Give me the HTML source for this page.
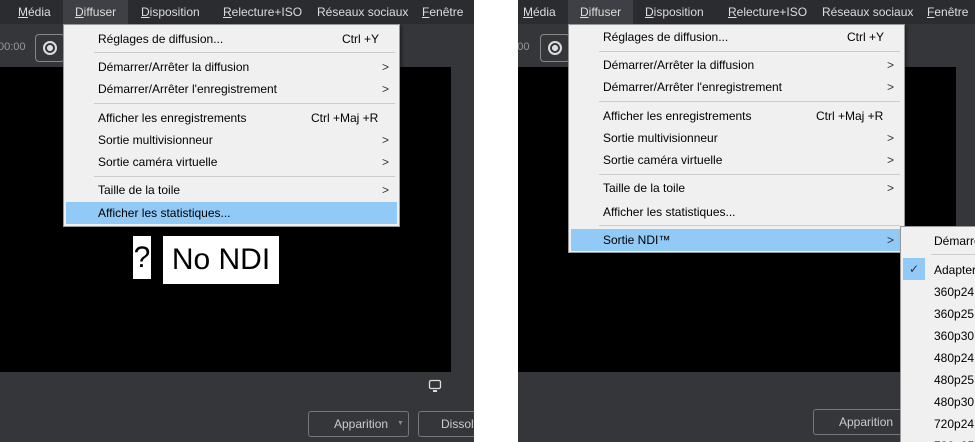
<!DOCTYPE html>
<html><head><meta charset="utf-8"><style>
*{margin:0;padding:0;box-sizing:border-box}
body{width:975px;height:442px;background:#fff;position:relative;overflow:hidden;font-family:"Liberation Sans",sans-serif;font-size:12px}
.p{position:absolute;top:0;height:442px;background:#35363a;overflow:hidden}
.bar{position:absolute;left:0;top:0;right:0;height:24px;background:#2b2c30}
.mi{position:absolute;top:5px;color:#ddd;font-size:12px}
.mi u{text-decoration:underline}
.hl{position:absolute;top:0;height:24px;background:#3f4045}
.blk{position:absolute;top:67px;height:305px;background:#000}
.menu{position:absolute;top:24px;width:337px;background:#f0f0f0;border:1px solid #999;box-shadow:2px 2px 3px rgba(0,0,0,.4)}
.it{position:absolute;left:34px;color:#000;white-space:nowrap}
.sc{position:absolute;color:#000}
.ar{position:absolute;left:318px;color:#333}
.sep{position:absolute;left:30px;right:4px;height:1px;background:#ccc}
.sel{position:absolute;left:2px;right:2px;height:22px;background:#91c9f7}
.btn{position:absolute;height:26px;border:1px solid #777;border-radius:3px;color:#ccc;font-size:12px;text-align:center;line-height:24px}
.rec{position:absolute;left:35px;top:34px;width:30px;height:28px;border:1px solid #888;border-radius:4px}
.rec:after{content:"";position:absolute;left:7px;top:6px;width:10px;height:10px;border:2px solid #ddd;border-radius:50%;background:radial-gradient(#ddd 40%,transparent 45%)}
</style></head><body>

<div class="p" style="left:0;width:474px">
 <div class="bar"></div>
 <div class="hl" style="left:63px;width:65px"></div>
 <div class="mi" style="left:18px"><u>M</u>édia</div>
 <div class="mi" style="left:75px"><u>D</u>iffuser</div>
 <div class="mi" style="left:141px"><u>D</u>isposition</div>
 <div class="mi" style="left:223px"><u>R</u>electure+ISO</div>
 <div class="mi" style="left:317px">Réseaux sociaux</div>
 <div class="mi" style="left:422px"><u>F</u>enêtre</div>
 <div style="position:absolute;left:-2px;top:41px;color:#999;font-size:11px">00:00</div>
 <div class="rec"></div>
 <div class="blk" style="left:0;width:451px"></div>
 <div style="position:absolute;left:133px;top:236px;width:18px;height:43px;background:#fff;font-size:30px;line-height:43px;text-align:center">?</div>
 <div style="position:absolute;left:163px;top:236px;width:116px;height:48px;background:#fff;font-size:30px;line-height:48px;text-align:center">No NDI</div>
 <svg style="position:absolute;left:428px;top:379px" width="14" height="14"><rect x="1.5" y="1.5" width="11" height="8" rx="1.5" fill="none" stroke="#ddd" stroke-width="1.3"/><rect x="5" y="11" width="4" height="2" fill="#ddd"/></svg>
 <div class="btn" style="left:308px;top:411px;width:101px;text-align:left;padding-left:25px">Apparition<span style="position:absolute;left:88px;top:0;font-size:7px;color:#888">▼</span></div>
 <div class="btn" style="left:418px;top:411px;width:70px;text-align:left;padding-left:22px">Dissolve</div>
 <div class="menu" style="left:63px;height:203px">
  <div class="it" style="top:7px">Réglages de diffusion...</div><div class="sc" style="left:278px;top:7px">Ctrl +Y</div>
  <div class="sep" style="top:27px"></div>
  <div class="it" style="top:35px">Démarrer/Arrêter la diffusion</div><div class="ar" style="top:35px">&gt;</div>
  <div class="it" style="top:57px">Démarrer/Arrêter l'enregistrement</div><div class="ar" style="top:57px">&gt;</div>
  <div class="sep" style="top:78px"></div>
  <div class="it" style="top:86px">Afficher les enregistrements</div><div class="sc" style="left:247px;top:86px">Ctrl +Maj +R</div>
  <div class="it" style="top:108px">Sortie multivisionneur</div><div class="ar" style="top:108px">&gt;</div>
  <div class="it" style="top:130px">Sortie caméra virtuelle</div><div class="ar" style="top:130px">&gt;</div>
  <div class="sep" style="top:151px"></div>
  <div class="it" style="top:158px">Taille de la toile</div><div class="ar" style="top:158px">&gt;</div>
  <div class="sel" style="top:177px"></div>
  <div class="it" style="top:181px">Afficher les statistiques...</div>
 </div>
</div>

<div class="p" style="left:518px;width:457px">
 <div class="bar"></div>
 <div class="hl" style="left:50px;width:65px"></div>
 <div class="mi" style="left:5px"><u>M</u>édia</div>
 <div class="mi" style="left:62px"><u>D</u>iffuser</div>
 <div class="mi" style="left:127px"><u>D</u>isposition</div>
 <div class="mi" style="left:210px"><u>R</u>electure+ISO</div>
 <div class="mi" style="left:304px">Réseaux sociaux</div>
 <div class="mi" style="left:409px"><u>F</u>enêtre</div>
 <div style="position:absolute;left:-16px;top:41px;color:#999;font-size:11px">00:00</div>
 <div class="rec" style="left:22px"></div>
 <div class="blk" style="left:0;width:438px"></div>
 <div class="btn" style="left:295px;top:409px;width:101px;text-align:left;padding-left:25px">Apparition</div>
 <div class="menu" style="left:50px;height:229px">
  <div class="it" style="top:5px">Réglages de diffusion...</div><div class="sc" style="left:278px;top:5px">Ctrl +Y</div>
  <div class="sep" style="top:26px"></div>
  <div class="it" style="top:33px">Démarrer/Arrêter la diffusion</div><div class="ar" style="top:33px">&gt;</div>
  <div class="it" style="top:55px">Démarrer/Arrêter l'enregistrement</div><div class="ar" style="top:55px">&gt;</div>
  <div class="sep" style="top:76px"></div>
  <div class="it" style="top:84px">Afficher les enregistrements</div><div class="sc" style="left:247px;top:84px">Ctrl +Maj +R</div>
  <div class="it" style="top:106px">Sortie multivisionneur</div><div class="ar" style="top:106px">&gt;</div>
  <div class="it" style="top:128px">Sortie caméra virtuelle</div><div class="ar" style="top:128px">&gt;</div>
  <div class="sep" style="top:149px"></div>
  <div class="it" style="top:156px">Taille de la toile</div><div class="ar" style="top:156px">&gt;</div>
  <div class="it" style="top:180px">Afficher les statistiques...</div>
  <div class="sep" style="top:200px"></div>
  <div class="sel" style="top:204px"></div>
  <div class="it" style="top:208px">Sortie NDI™</div><div class="ar" style="top:208px">&gt;</div>
 </div>
 <div class="menu" style="left:382px;top:226px;height:230px;width:100px">
  <div class="it" style="left:33px;top:7px">Démarrer</div>
  <div class="sep" style="top:27px;left:30px"></div>
  <div style="position:absolute;left:2px;top:31px;width:22px;height:22px;background:#91c9f7;text-align:center;line-height:22px;color:#333">✓</div>
  <div class="it" style="left:33px;top:36px">Adapter</div>
  <div class="it" style="left:33px;top:58px">360p24</div>
  <div class="it" style="left:33px;top:80px">360p25</div>
  <div class="it" style="left:33px;top:102px">360p30</div>
  <div class="it" style="left:33px;top:124px">480p24</div>
  <div class="it" style="left:33px;top:146px">480p25</div>
  <div class="it" style="left:33px;top:168px">480p30</div>
  <div class="it" style="left:33px;top:190px">720p24</div>
  <div class="it" style="left:33px;top:212px">720p25</div>
 </div>
</div>
</body></html>
